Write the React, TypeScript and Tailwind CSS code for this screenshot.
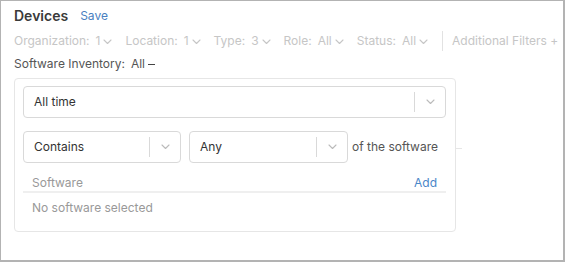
import React from "react";

const Chevron = ({ className = "" }: { className?: string }) => (
  <svg width="9" height="6" viewBox="0 0 9 6" className={className} fill="none">
    <path d="M1 1l3.5 3.5L8 1" stroke="currentColor" strokeWidth="1.1" strokeLinecap="round" strokeLinejoin="round" />
  </svg>
);

const Select = ({ value, className = "" }: { value: string; className?: string }) => (
  <div className={`h-[32px] flex items-center border border-[#d9d9d9] rounded-[4px] bg-white ${className}`}>
    <span className="flex-1 pl-[10px] text-[12px] text-[#333] whitespace-nowrap">{value}</span>
    <span className="w-px h-[20px] bg-[#d9d9d9]" />
    <span className="w-[30px] flex items-center justify-center text-[#bbb]">
      <Chevron />
    </span>
  </div>
);

const Filter = ({ label, value }: { label: string; value: string }) => (
  <span className="flex items-center whitespace-nowrap">
    <span>{label}</span>
    <span className="ml-[6px]">{value}</span>
    <Chevron className="ml-[3px] mt-[1px]" />
  </span>
);

export default function App() {
  return (
    <div
      className="w-[565px] h-[262px] bg-white border-l border-t border-r-2 border-b-2 border-[#b3b3b3] relative"
      style={{ fontFamily: "Inter, 'Noto Sans', sans-serif" }}
    >
      <div className="pl-[13px] pt-[6px]">
        <div className="flex items-center gap-[12px] h-[18px]">
          <span className="text-[14px] font-semibold text-[#3a3a3a] leading-none">Devices</span>
          <span className="text-[12px] text-[#4a7fc1] leading-none">Save</span>
        </div>
        <div className="mt-[6px] flex items-center text-[12px] text-[#c6c6c6] gap-[13px] h-[20px] whitespace-nowrap">
          <Filter label="Organization:" value="1" />
          <Filter label="Location:" value="1" />
          <Filter label="Type:" value="3" />
          <Filter label="Role:" value="All" />
          <Filter label="Status:" value="All" />
          <span className="w-px h-[20px] bg-[#e2e2e2] ml-[1px]" />
          <span className="-ml-[4px]">Additional Filters +</span>
        </div>
        <div className="mt-[4px] text-[12px] text-[#555] flex items-center h-[18px]">
          <span>Software Inventory:</span>
          <span className="ml-[6px]">All</span>
          <span className="ml-[3px] mt-[1px] w-[7px] h-px bg-[#444]" />
        </div>
        <div className="mt-[5px] w-[442px] h-[154px] border border-[#e6e6e6] rounded-[4px] px-[8px] pt-[7px] relative">
          <Select value="All time" className="w-[423px]" />
          <div className="mt-[13px] flex items-center">
            <Select value="Contains" className="w-[158px]" />
            <Select value="Any" className="w-[159px] ml-[8px]" />
            <span className="ml-[4px] text-[12px] text-[#555] whitespace-nowrap">of the software</span>
          </div>
          <div className="mt-[11px] w-[423px] h-[19px] flex items-center justify-between px-[9px] border-b-2 border-[#efefef] text-[12px]">
            <span className="text-[#999]">Software</span>
            <span className="text-[#4a86c8]">Add</span>
          </div>
          <div className="pl-[9px] pt-[7px] h-[16px] leading-[16px] text-[12px] text-[#999] box-content">No software selected</div>
          <span className="absolute left-[440px] top-[69px] w-[7px] h-px bg-[#e6e6e6]" />
        </div>
      </div>
    </div>
  );
}
